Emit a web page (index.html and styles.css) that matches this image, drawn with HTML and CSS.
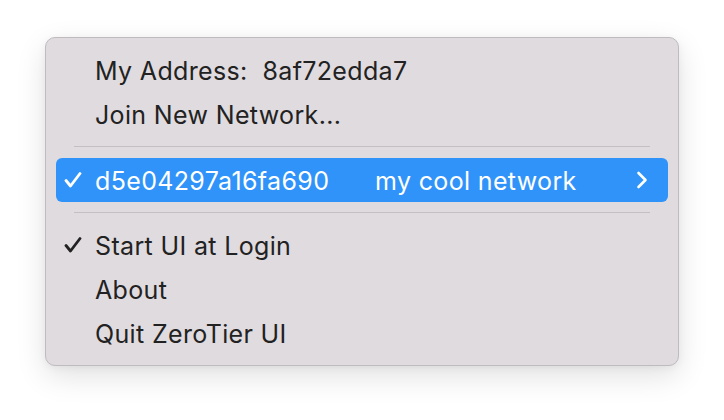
FILE: index.html
```html
<!DOCTYPE html>
<html>
<head>
<meta charset="utf-8">
<link rel="stylesheet" href="styles.css">
</head>
<body>
<div class="menu">
  <div class="item"><span class="check"></span><span class="label">My Address:&nbsp; 8af72edda7</span></div>
  <div class="item"><span class="check"></span><span class="label">Join New Network...</span></div>
  <div class="sep"></div>
  <div class="item active">
    <span class="check">
      <svg width="18" height="16" viewBox="0 0 18 16"><path d="M2 8.5 L6.5 14 L16 1.5" fill="none" stroke="currentColor" stroke-width="2.8" stroke-linecap="round" stroke-linejoin="round"/></svg>
    </span>
    <span class="label net-id">d5e04297a16fa690</span>
    <span class="label net-name">my cool network</span>
    <span class="chev">
      <svg width="12" height="18" viewBox="0 0 12 18"><path d="M2.5 2 L9.5 9 L2.5 16" fill="none" stroke="currentColor" stroke-width="2.6" stroke-linecap="round" stroke-linejoin="round"/></svg>
    </span>
  </div>
  <div class="sep"></div>
  <div class="item">
    <span class="check">
      <svg width="18" height="16" viewBox="0 0 18 16"><path d="M2 8.5 L6.5 14 L16 1.5" fill="none" stroke="currentColor" stroke-width="2.8" stroke-linecap="round" stroke-linejoin="round"/></svg>
    </span>
    <span class="label">Start UI at Login</span>
  </div>
  <div class="item"><span class="check"></span><span class="label">About</span></div>
  <div class="item"><span class="check"></span><span class="label">Quit ZeroTier UI</span></div>
</div>
</body>
</html>
```
FILE: styles.css
```css
html, body {
  margin: 0;
  padding: 0;
  background: #ffffff;
}
body {
  width: 724px;
  height: 420px;
  padding: 37px 0 0 45px;
  box-sizing: border-box;
  font-family: Inter, "Noto Sans", sans-serif;
}
.menu {
  width: 634px;
  height: 329px;
  box-sizing: border-box;
  background: #e0dbdf;
  border: 1px solid #bfbbbe;
  border-radius: 10px;
  box-shadow: 0 10px 30px rgba(0, 0, 0, 0.12), 0 2px 8px rgba(0, 0, 0, 0.05);
  padding: 10px 10px 10px 10px;
  display: flex;
  flex-direction: column;
}
.item {
  height: 44px;
  display: flex;
  align-items: center;
  font-size: 25px;
  color: #222222;
  border-radius: 6px;
  padding-left: 5px;
}
.check {
  width: 31px;
  display: flex;
  align-items: center;
  padding-left: 3px;
  color: #222222;
}
.label {
  white-space: nowrap;
  letter-spacing: 0.35px;
  padding-top: 2px;
}
.active {
  background: #3093f9;
  color: #ffffff;
}
.active .check {
  color: #ffffff;
}
.net-id {
  width: 280px;
}
.net-name {
  flex: 1;
}
.chev {
  width: 32px;
  display: flex;
  align-items: center;
}
.sep {
  height: 22px;
  display: flex;
  align-items: center;
  margin: 0 18px;
  position: relative;
}
.sep::before {
  content: "";
  display: block;
  width: 100%;
  height: 1.5px;
  background: #c4bfc3;
}
```
